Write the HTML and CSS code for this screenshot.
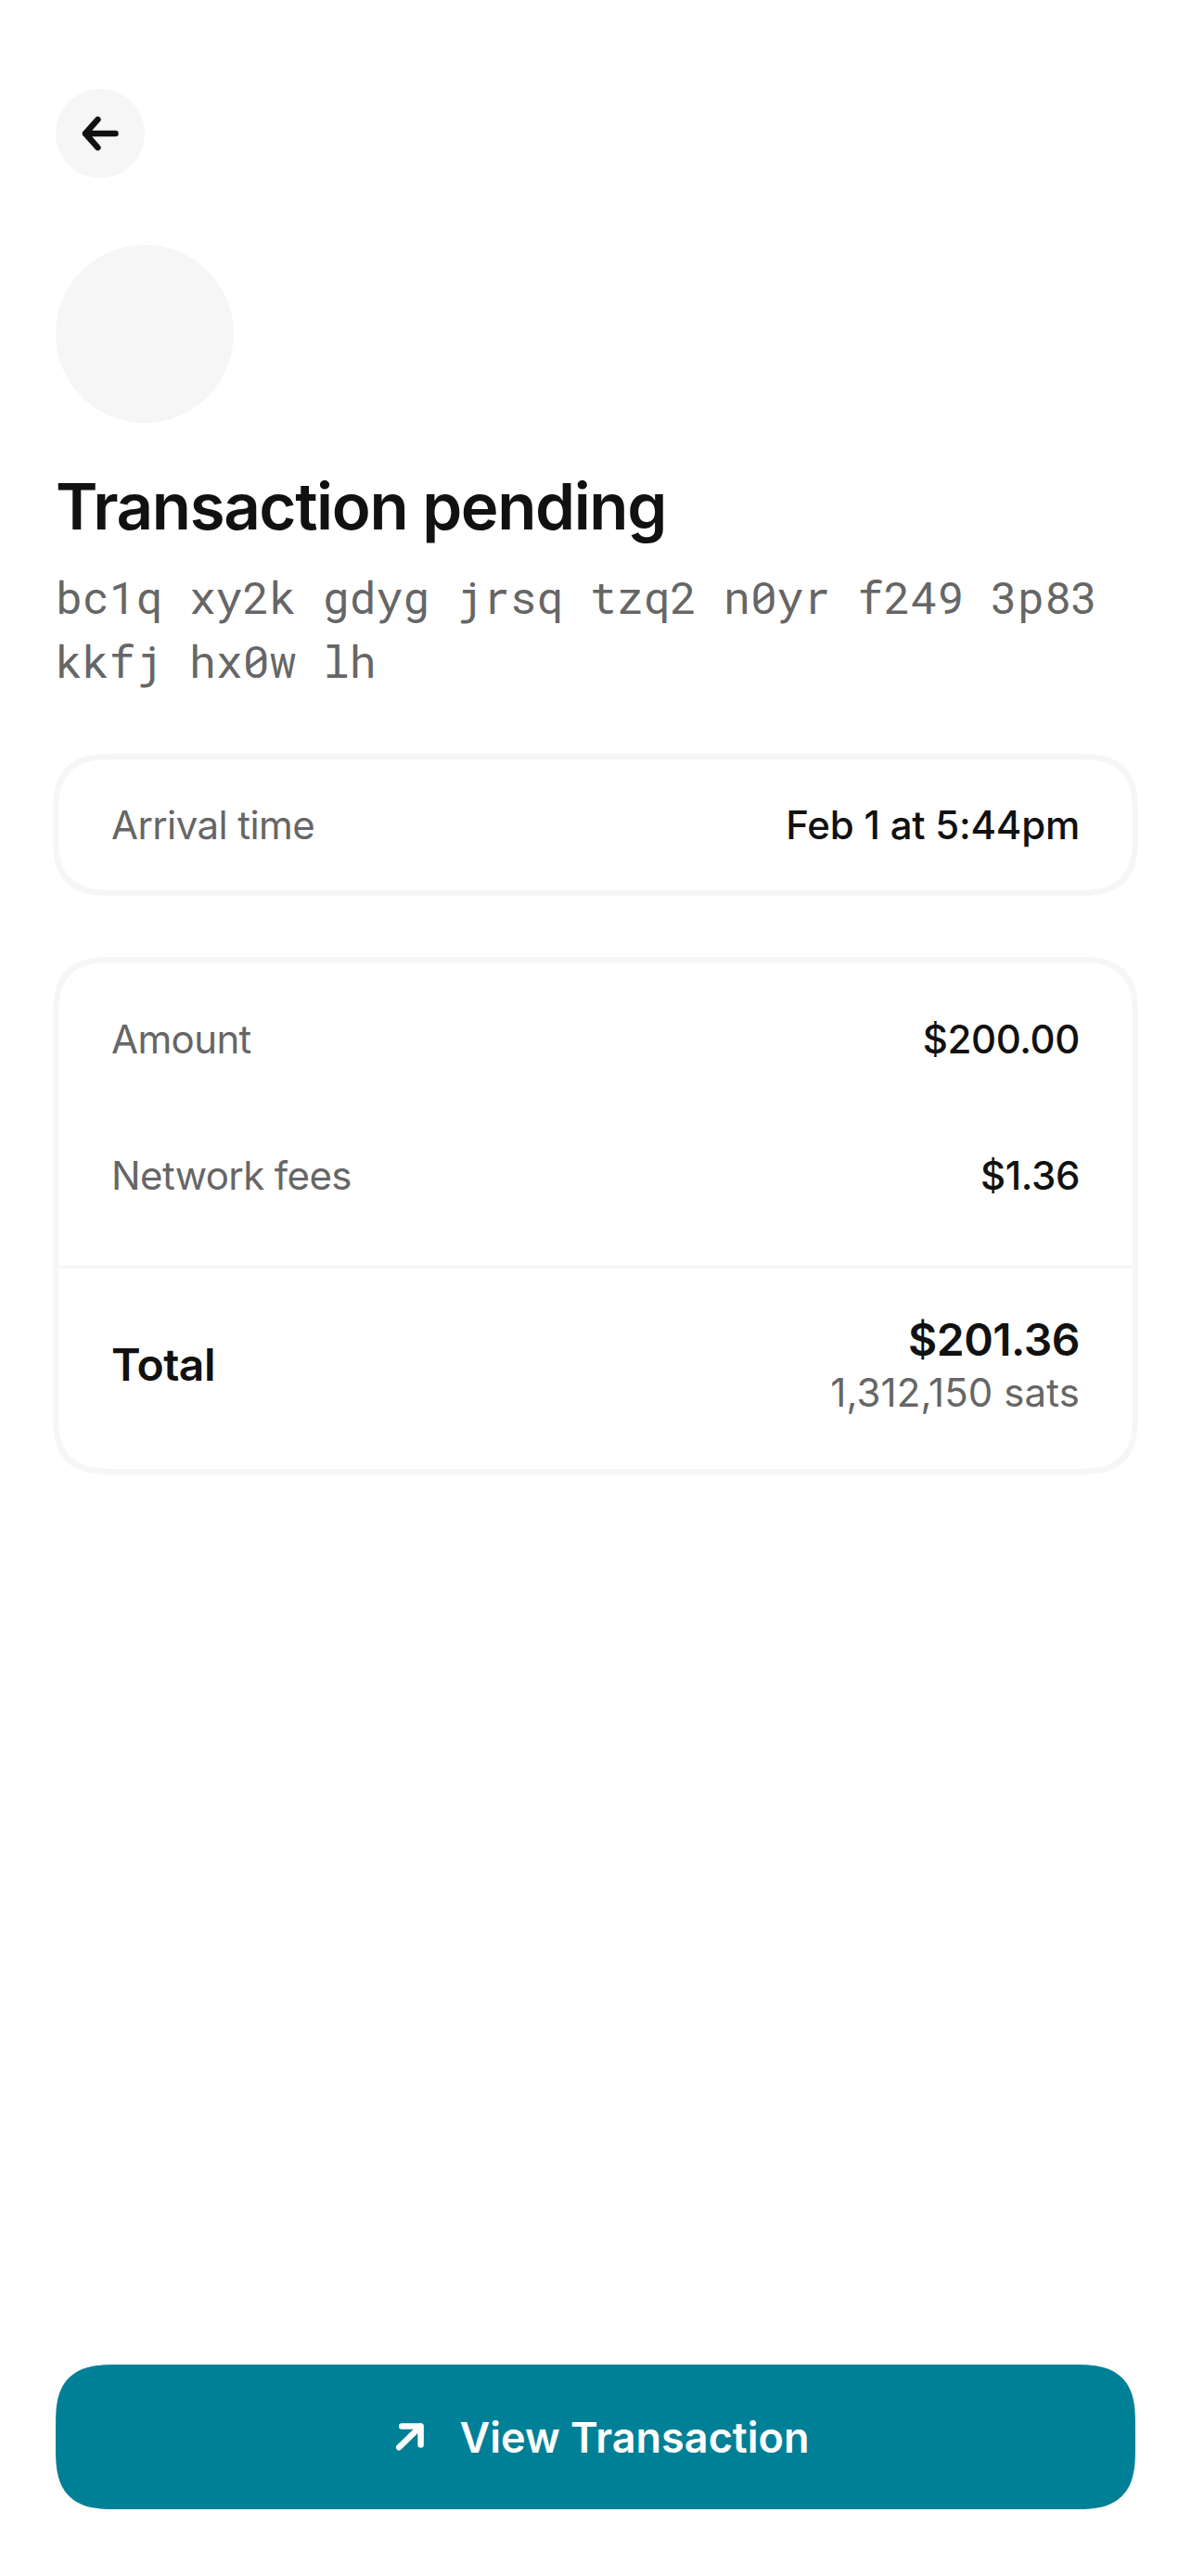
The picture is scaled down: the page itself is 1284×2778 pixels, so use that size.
FILE: index.html
```html
<!DOCTYPE html>
<html lang="en">
<head>
<meta charset="utf-8">
<title>Transaction pending</title>
<link rel="stylesheet" href="styles.css">
</head>
<body>
<main class="screen">
  <button class="back" aria-label="Back">
    <svg class="back-icon" viewBox="0 0 48 48" aria-hidden="true"><path d="M40.5 24H8M21.4 8.9L8 24l13.4 15.1"/></svg>
  </button>
  <div class="avatar"></div>
  <h1 class="title">Transaction pending</h1>
  <p class="address">bc1q xy2k gdyg jrsq tzq2 n0yr f249 3p83 kkfj hx0w lh</p>
  <section class="card">
    <div class="row"><span class="label">Arrival time</span><span class="value">Feb 1 at 5:44pm</span></div>
  </section>
  <section class="card card-amounts">
    <div class="row"><span class="label">Amount</span><span class="value amount">$200.00</span></div>
    <div class="row"><span class="label">Network fees</span><span class="value amount">$1.36</span></div>
    <div class="total">
      <span class="total-label">Total</span>
      <div class="total-values">
        <span class="total-label">$201.36</span>
        <span class="sats">1,312,150 sats</span>
      </div>
    </div>
  </section>
  <button class="cta">
    <svg class="cta-icon" viewBox="0 0 60 60" aria-hidden="true"><path d="M18.2 41.3L41.5 18.5M21.2 18.5H41.6V38.5"/></svg>
    <span>View Transaction</span>
  </button>
</main>
</body>
</html>
```
FILE: styles.css
```css
* {
  box-sizing: border-box;
}

body {
  margin: 0;
  background: #fff;
  color: #111;
  font-family: Inter, "Liberation Sans", sans-serif;
}

button {
  border: 0;
  padding: 0;
  font: inherit;
}

.screen {
  display: flex;
  flex-direction: column;
  align-items: stretch;
  height: 2778px;
  padding: 96px 60px 72px;
}

.back {
  display: flex;
  align-items: center;
  justify-content: center;
  width: 96px;
  height: 96px;
  border-radius: 50%;
  background: #f6f6f6;
}

.back-icon {
  width: 48px;
  height: 48px;
  fill: none;
  stroke: #111;
  stroke-width: 6.5;
  stroke-linecap: round;
  stroke-linejoin: round;
}

.avatar {
  width: 192px;
  height: 192px;
  margin-top: 72px;
  border-radius: 50%;
  background: #f6f6f6;
}

.title {
  margin: 48px 0 0;
  font-size: 69px;
  font-weight: 600;
  line-height: 84px;
  letter-spacing: -1.4px;
}

.address {
  margin: 21px 0 0;
  color: #666;
  font-family: "Roboto Mono", "DejaVu Sans Mono", monospace;
  font-size: 48px;
  line-height: 69px;
}

.card {
  margin: 66px -3px 0;
  border: 6px solid #f6f6f6;
  border-radius: 51px;
}

.row {
  display: flex;
  align-items: center;
  justify-content: space-between;
  height: 141px;
  padding: 0 57px;
}

.card-amounts {
  padding-top: 9px;
}

.card-amounts .row {
  height: 147px;
}

.label {
  color: #666;
  font-size: 42px;
  line-height: 54px;
  letter-spacing: -0.6px;
}

.value {
  font-size: 42px;
  font-weight: 500;
  letter-spacing: -0.23px;
}

.amount {
  letter-spacing: -0.4px;
}

.total {
  display: flex;
  align-items: center;
  justify-content: space-between;
  height: 219px;
  margin-top: 24px;
  padding: 0 57px 9px;
  border-top: 3px solid #f6f6f6;
}

.total-label {
  font-size: 48px;
  font-weight: 600;
  line-height: 60px;
  letter-spacing: -0.5px;
}

.total-values {
  display: flex;
  flex-direction: column;
  align-items: flex-end;
}

.sats {
  color: #666;
  font-size: 42px;
  line-height: 54px;
  letter-spacing: 0.1px;
}

.cta {
  display: flex;
  align-items: center;
  justify-content: center;
  gap: 24px;
  height: 156px;
  margin-top: auto;
  border-radius: 50px;
  background: #008097;
  color: #fff;
  font-size: 45px;
  font-weight: 600;
}

.cta-icon {
  width: 60px;
  height: 60px;
  fill: none;
  stroke: #fff;
  stroke-width: 6.5;
  stroke-linecap: round;
  stroke-linejoin: round;
}

@supports (corner-shape: squircle) {
  .card,
  .cta {
    border-radius: 66px;
    corner-shape: superellipse(1.5);
  }
}
```
